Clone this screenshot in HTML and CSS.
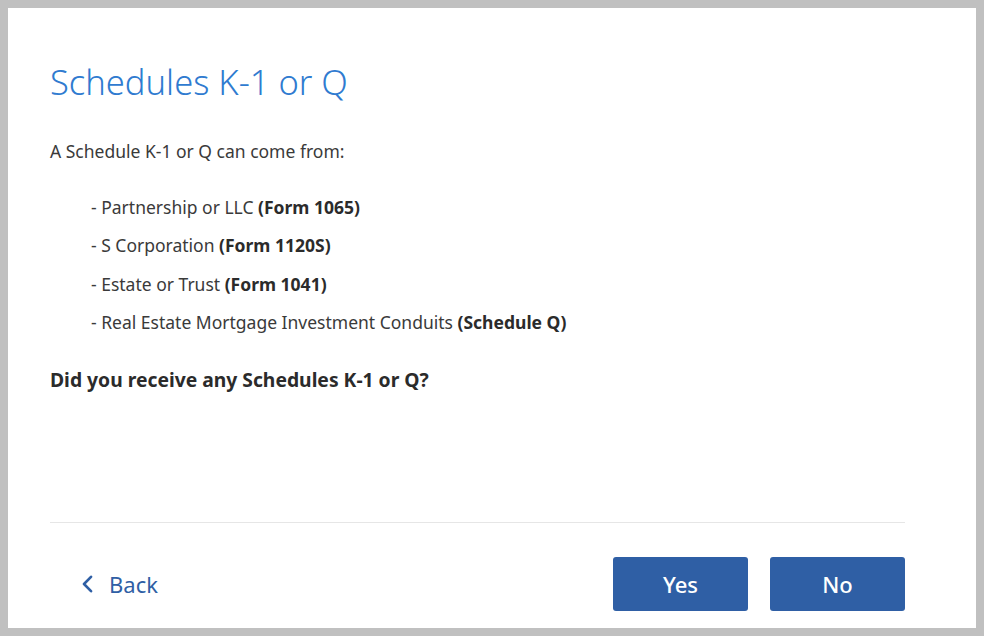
FILE: index.html
```html
<!DOCTYPE html>
<html lang="en">
<head>
    <meta charset="UTF-8">
    <meta name="viewport" content="width=device-width, initial-scale=1.0">
    <title>Schedules K-1 or Q</title>
    <link rel="stylesheet" href="styles.css">
</head>
<body>
<div class="panel">
    <div class="content">
        <h1>Schedules K-1 or Q</h1>

        <p class="intro">A Schedule K-1 or Q can come from:</p>

        <ul class="sources">
            <li>- Partnership or LLC <strong>(Form 1065)</strong></li>
            <li>- S Corporation <strong>(Form 1120S)</strong></li>
            <li>- Estate or Trust <strong>(Form 1041)</strong></li>
            <li>- Real Estate Mortgage Investment Conduits <strong>(Schedule Q)</strong></li>
        </ul>

        <p class="question">Did you receive any Schedules K-1 or Q?</p>
    </div>

    <div class="footer">
        <a href="#" class="back">
            <svg width="13" height="18" viewBox="0 0 13 18" aria-hidden="true">
                <path d="M10 1.8 L3 9 L10 16.2" fill="none" stroke="currentColor" stroke-width="2.6" stroke-linecap="round" stroke-linejoin="round"/>
            </svg>
            Back
        </a>
        <div class="actions">
            <button type="button">Yes</button>
            <button type="button">No</button>
        </div>
    </div>
</div>
</body>
</html>
```

FILE: styles.css
```css
body {
    margin: 0;
    padding: 8px;
    background: #c0c0c0;
    font-family: "Noto Sans", "Open Sans", sans-serif;
    color: #3a3a3a;
}

.panel {
    height: 620px;
    padding: 0 71px 0 42px;
    background: #ffffff;
    display: flex;
    flex-direction: column;
}

.content {
    flex: 1;
}

h1 {
    margin: 54px 0 0;
    font-size: 34.5px;
    font-weight: 300;
    line-height: 40px;
    color: #2f7bd0;
}

.intro {
    margin: 37px 0 0;
    font-size: 17.5px;
    line-height: 24px;
}

.sources {
    list-style: none;
    margin: 25px 0 0;
    padding: 0 0 0 41px;
}

.sources li {
    font-size: 17.5px;
    line-height: 38.4px;
}

.sources strong {
    font-weight: 700;
    color: #2b2b2b;
}

.question {
    margin: 25px 0 0;
    font-size: 19.3px;
    font-weight: 700;
    line-height: 26px;
    color: #2b2b2b;
}

.footer {
    border-top: 1px solid #e6e6e6;
    padding: 34px 0 17px;
    display: flex;
    justify-content: space-between;
    align-items: center;
}

.back {
    display: flex;
    align-items: center;
    gap: 15px;
    margin-left: 31px;
    font-size: 22px;
    color: #2f5fa5;
    text-decoration: none;
}

.actions {
    display: flex;
    gap: 22px;
}

.actions button {
    width: 135px;
    height: 54px;
    background: #2f5fa5;
    color: #ffffff;
    font-family: inherit;
    font-size: 22px;
    font-weight: 500;
    border: none;
    border-radius: 3px;
    cursor: pointer;
}
```
